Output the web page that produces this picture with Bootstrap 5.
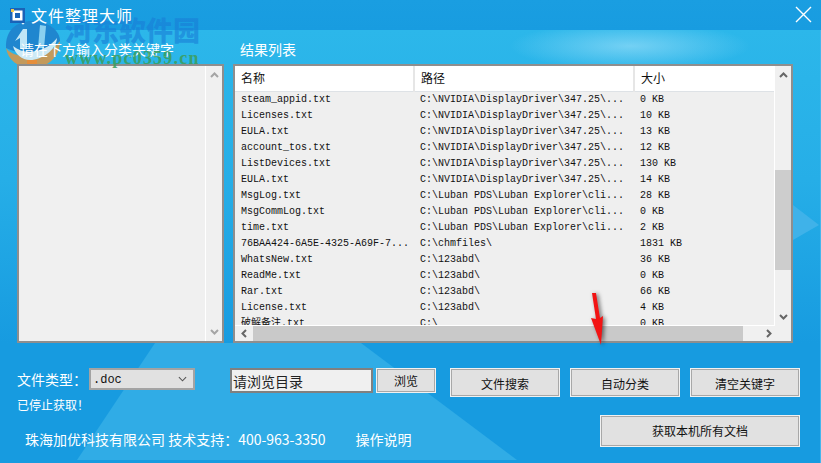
<!DOCTYPE html>
<html lang="zh">
<head>
<meta charset="utf-8">
<title>文件整理大师</title>
<link href="https://cdn.jsdelivr.net/npm/bootstrap@5.3.0/dist/css/bootstrap.min.css" rel="stylesheet">
<style>
html,body{margin:0;width:821px;height:463px;overflow:hidden;background:#179fe2}
body{font-family:"Noto Sans CJK SC","Liberation Sans",sans-serif;color:#fff;font-size:14px;line-height:1}
.app-win{position:relative;isolation:isolate;width:821px;height:463px;overflow:hidden;
 background:
  linear-gradient(#45b6ec,#45b6ec) right 30px/1px 100% no-repeat,
  linear-gradient(#1a9ee1,#189ce0) 0 0/100% 30px no-repeat,
  radial-gradient(ellipse 120px 24px at 630px 46px,rgba(160,225,250,.62),rgba(160,225,250,0)) 0 0/100% 100% no-repeat,
  linear-gradient(180deg,#2cb7ea 30px,#26aee7 180px,#179be0 343px) 0 0/100% 463px no-repeat,
  #179ee1}
.app-win::before{content:"";position:absolute;inset:0;z-index:-1;background:#30ace6;clip-path:polygon(155px 343px,361px 343px,517px 460px,77px 460px)}
.side-wedge{position:absolute;z-index:-1;left:793px;top:205px;width:26px;height:35px;background:#3fb2e9;clip-path:polygon(0 0,100% 57%,0 100%)}
.title-zone{height:30px;padding-left:10px;flex:none}
.title-icon{width:15px;height:15px;margin-right:6px;flex:none}
.title-text{font-size:16px;letter-spacing:1px}
.close-x{width:17px;height:17px;margin-left:auto;margin-right:9px;margin-top:-1px}
.label-row{height:34px;padding:12px 0 0 20px;flex:none}
.label-left{width:220px}
.panel-row{height:279px;padding-left:17px;gap:9px;flex:none}
.list-box{border:2px solid #8e8e8e;background:#f0f0f0;overflow:hidden;height:279px}
.key-box{width:207px}
.key-main{flex:1;background:#f0f0f0;border-right:1px solid #fff}
.result-box{width:560px}
.v-bar{width:16px;flex:none;background:#f0f0f0}
.arrow-cell{height:18px;flex:none}
.v-track{flex:1;padding-top:86px}
.v-thumb{height:100px;background:#cdcdcd}
.res-body{flex:1;min-height:0}
.res-main{width:540px;flex:none;border-right:1px solid #fff}
.res-table{width:539px;table-layout:fixed;border-collapse:collapse;color:#111;margin:0}
.res-table th{height:25px;background:#fff;font-weight:400;font-size:12px;padding:0 0 1px 6px;border-right:2px solid #e6e6e6;vertical-align:middle;color:#111}
.res-table th:last-child{border-right:0}
.res-table td{height:16px;padding:0 0 0 6px;background:#efefef;font-family:"Liberation Mono","Noto Sans CJK SC",monospace;font-size:10px;line-height:16px;white-space:nowrap;overflow:hidden;border:0;color:#111}
.col-name{width:179px}.col-path{width:220px}
.table-clip{flex:1;min-height:0;overflow:hidden;border-bottom:1px solid #fff}
.h-bar{height:15px;flex:none;background:#f0f0f0}
.h-arrow{width:18px;flex:none}
.h-thumb{width:490px;background:#c9c9c9}
.h-rest{flex:1;padding-right:19px}
.control-row{padding:25px 0 0 17px;height:54px;flex:none}
.type-label{width:72px;font-size:14px;padding-top:4px;flex:none}
.type-select.form-select{width:106px;height:22px;min-height:0;border:2px solid #a3a3a3;border-radius:0;background-color:#e1e1e1;
 background-image:url("data:image/svg+xml,%3Csvg xmlns='http://www.w3.org/2000/svg' viewBox='0 0 10 6'%3E%3Cpath d='M1 1l4 4 4-4' fill='none' stroke='%23555' stroke-width='1.2'/%3E%3C/svg%3E");
 background-position:right 6px center;background-size:9px 6px;padding:3px 0 0 2px;font-family:"Liberation Mono",monospace;font-size:12px;color:#111;line-height:15px;flex:none}
.dir-input.form-control{width:143px;height:25px;margin-left:35px;border:2px solid #808080;border-radius:0;background:#f0f0f0;padding:0 0 0 1px;font-size:14px;color:#222;flex:none}
.win-btn.btn{border:1px solid #f1f1f1;border-radius:0;background:#e1e1e1;color:#111;font-size:12px;line-height:1;padding:0;box-shadow:inset 0 0 0 1px #a8a8a8;flex:none;display:flex;align-items:center;justify-content:center}
.browse-btn{width:60px;height:25px;margin-left:3px}
.win-btn.act-btn{width:110px;height:29px;margin-left:10px;padding-top:2px}
.win-btn.act-btn.first-act{margin-left:14px}
.foot-row{flex:1;padding-left:17px}
.status-text{font-size:12px;margin-top:2px}
.company-text{font-size:14px;margin:21px 0 0 8px;white-space:nowrap}
.manual-text{margin-left:30px}
.scan-btn{width:200px;height:32px;margin:18px 21px 0 auto}
.mark-logo{position:absolute;z-index:-1;left:0;top:8px;width:80px;height:62px}
.mark-cn{position:absolute;z-index:-1;left:65px;top:16px;font-size:27px;font-weight:900;color:rgba(25,125,215,.62);white-space:nowrap}
.mark-url{position:absolute;z-index:2;left:65px;top:49px;font-family:"Liberation Serif",serif;font-weight:700;font-size:18px;letter-spacing:1.2px;color:rgba(60,158,95,.9);white-space:nowrap}
.red-arrow{position:absolute;left:575px;top:285px;width:50px;height:70px;filter:drop-shadow(2px 1px 2px rgba(0,0,0,.55))}
</style>
</head>
<body>
<div class="app-win d-flex flex-column">
  <div class="side-wedge"></div>
  <svg class="mark-logo" viewBox="0 0 80 62"><path d="M6 40C14 52 48 52 60 33C60 50 46 60 32 60C18 60 8 52 6 40z" fill="#c39a5c"/><path d="M6 40C5 22 17 13 32 13C47 13 60 22 60 33C48 44 20 48 6 40z" fill="#1f86cf"/><path d="M13 38C25 48 45 45 57 30C56 42 42 52 30 52C22 52 15 46 13 38z" fill="#cdeaf6"/><path d="M23 21l4 0v20h-7V30l-5 3z" fill="#bfe6f7"/><path d="M40 17l6 1-2 22h-6z" fill="#8ad0f0"/><circle cx="23" cy="15" r="1.4" fill="#dff3fb"/><rect x="27" y="52" width="10" height="10" fill="#f08a30" opacity=".75"/></svg>
  <div class="mark-cn">河东软件园</div>
  <div class="mark-url">www.pc0359.cn</div>
  <div class="title-zone d-flex align-items-center">
    <svg class="title-icon" viewBox="0 0 15 15"><rect width="15" height="15" fill="#1a63b8"/><rect x="2.5" y="2.5" width="10" height="10" fill="#fff"/><rect x="5" y="5" width="5" height="5" fill="#1a63b8"/><rect x="1" y="1" width="3" height="3" fill="#f2c94c"/></svg>
    <span class="title-text">文件整理大师</span>
    <svg class="close-x" viewBox="0 0 17 17"><path d="M1 1l15 15M16 1L1 16" stroke="#fff" stroke-width="1.4" fill="none"/></svg>
  </div>
  <div class="label-row d-flex">
    <div class="label-left">请在下方输入分类关键字</div>
    <div>结果列表</div>
  </div>
  <div class="panel-row d-flex">
    <div class="list-box key-box d-flex">
      <div class="key-main"></div>
      <div class="v-bar d-flex flex-column">
        <div class="arrow-cell d-flex justify-content-center align-items-center"><svg width="9" height="6" viewBox="0 0 9 6"><path d="M1 5l3.5-3.5L8 5" fill="none" stroke="#a5a5a5" stroke-width="2"/></svg></div>
        <div class="flex-grow-1"></div>
        <div class="arrow-cell d-flex justify-content-center align-items-center"><svg width="9" height="6" viewBox="0 0 9 6"><path d="M1 1l3.5 3.5L8 1" fill="none" stroke="#a5a5a5" stroke-width="2"/></svg></div>
      </div>
    </div>
    <div class="list-box result-box d-flex flex-column">
      <div class="res-body d-flex">
        <div class="res-main d-flex flex-column">
          <div class="table-clip">
          <table class="table res-table">
            <colgroup><col class="col-name"><col class="col-path"><col></colgroup>
            <thead><tr><th>名称</th><th>路径</th><th>大小</th></tr></thead>
            <tbody>
              <tr><td>steam_appid.txt</td><td>C:\NVIDIA\DisplayDriver\347.25\...</td><td>0 KB</td></tr>
              <tr><td>Licenses.txt</td><td>C:\NVIDIA\DisplayDriver\347.25\...</td><td>10 KB</td></tr>
              <tr><td>EULA.txt</td><td>C:\NVIDIA\DisplayDriver\347.25\...</td><td>13 KB</td></tr>
              <tr><td>account_tos.txt</td><td>C:\NVIDIA\DisplayDriver\347.25\...</td><td>12 KB</td></tr>
              <tr><td>ListDevices.txt</td><td>C:\NVIDIA\DisplayDriver\347.25\...</td><td>130 KB</td></tr>
              <tr><td>EULA.txt</td><td>C:\NVIDIA\DisplayDriver\347.25\...</td><td>14 KB</td></tr>
              <tr><td>MsgLog.txt</td><td>C:\Luban PDS\Luban Explorer\cli...</td><td>28 KB</td></tr>
              <tr><td>MsgCommLog.txt</td><td>C:\Luban PDS\Luban Explorer\cli...</td><td>0 KB</td></tr>
              <tr><td>time.txt</td><td>C:\Luban PDS\Luban Explorer\cli...</td><td>2 KB</td></tr>
              <tr><td>76BAA424-6A5E-4325-A69F-7...</td><td>C:\chmfiles\</td><td>1831 KB</td></tr>
              <tr><td>WhatsNew.txt</td><td>C:\123abd\</td><td>36 KB</td></tr>
              <tr><td>ReadMe.txt</td><td>C:\123abd\</td><td>0 KB</td></tr>
              <tr><td>Rar.txt</td><td>C:\123abd\</td><td>66 KB</td></tr>
              <tr><td>License.txt</td><td>C:\123abd\</td><td>4 KB</td></tr>
              <tr><td>破解备注.txt</td><td>C:\</td><td>0 KB</td></tr>
            </tbody>
          </table>
          </div>
        </div>
        <div class="v-bar d-flex flex-column">
          <div class="arrow-cell d-flex justify-content-center align-items-center"><svg width="9" height="6" viewBox="0 0 9 6"><path d="M1 5l3.5-3.5L8 5" fill="none" stroke="#666" stroke-width="2"/></svg></div>
          <div class="v-track"><div class="v-thumb"></div></div>
          <div class="arrow-cell d-flex justify-content-center align-items-center"><svg width="9" height="6" viewBox="0 0 9 6"><path d="M1 1l3.5 3.5L8 1" fill="none" stroke="#666" stroke-width="2"/></svg></div>
        </div>
      </div>
      <div class="h-bar d-flex">
        <div class="h-arrow d-flex justify-content-center align-items-center"><svg width="6" height="9" viewBox="0 0 6 9"><path d="M5 1L1.5 4.5 5 8" fill="none" stroke="#666" stroke-width="2"/></svg></div>
        <div class="h-thumb"></div>
        <div class="h-rest d-flex justify-content-end align-items-center"><svg width="6" height="9" viewBox="0 0 6 9"><path d="M1 1l3.5 3.5L1 8" fill="none" stroke="#666" stroke-width="2"/></svg></div>
      </div>
    </div>
  </div>
  <div class="control-row d-flex align-items-start">
    <div class="type-label">文件类型：</div>
    <select class="form-select type-select"><option>.doc</option></select>
    <input class="form-control dir-input" type="text" value="请浏览目录">
    <button class="btn win-btn browse-btn" type="button">浏览</button>
    <button class="btn win-btn act-btn first-act" type="button">文件搜索</button>
    <button class="btn win-btn act-btn" type="button">自动分类</button>
    <button class="btn win-btn act-btn" type="button">清空关键字</button>
  </div>
  <div class="foot-row d-flex align-items-start">
    <div>
      <div class="status-text">已停止获取！</div>
      <div class="company-text">珠海加优科技有限公司 技术支持：400-963-3350<span class="manual-text">操作说明</span></div>
    </div>
    <button class="btn win-btn scan-btn" type="button">获取本机所有文档</button>
  </div>
  <svg class="red-arrow" viewBox="0 0 50 70"><path d="M17 8L21 8L25 33L28 31L26 60L16 33L21 34Z" fill="#f21414"/></svg>
</div>
</body>
</html>
